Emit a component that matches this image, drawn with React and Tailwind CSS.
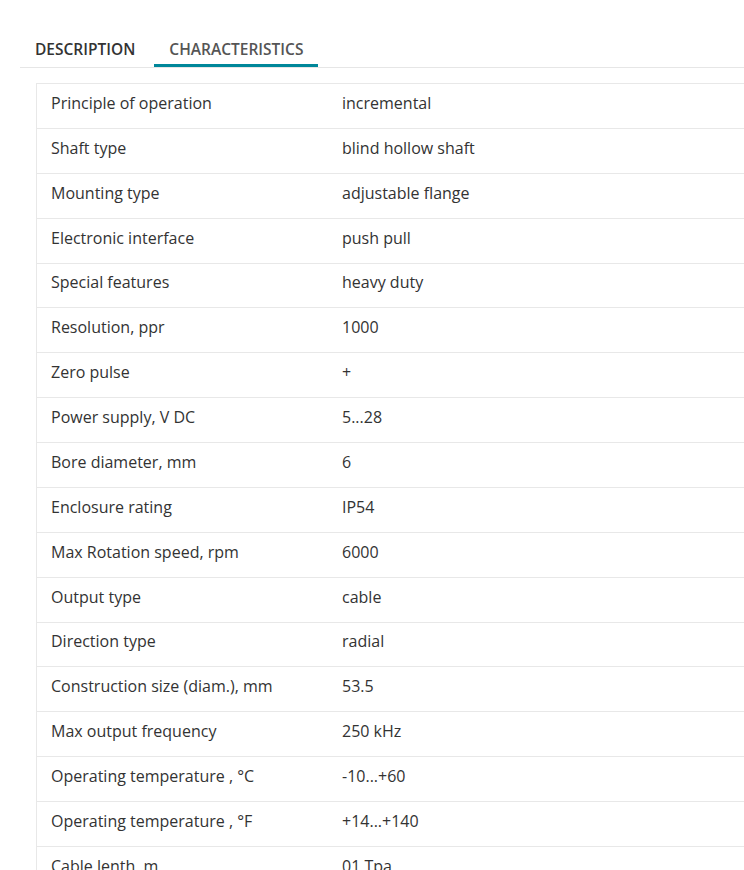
import React from 'react';

const rows = [
  ['Principle of operation', 'incremental'],
  ['Shaft type', 'blind hollow shaft'],
  ['Mounting type', 'adjustable flange'],
  ['Electronic interface', 'push pull'],
  ['Special features', 'heavy duty'],
  ['Resolution, ppr', '1000'],
  ['Zero pulse', '+'],
  ['Power supply, V DC', '5...28'],
  ['Bore diameter, mm', '6'],
  ['Enclosure rating', 'IP54'],
  ['Max Rotation speed, rpm', '6000'],
  ['Output type', 'cable'],
  ['Direction type', 'radial'],
  ['Construction size (diam.), mm', '53.5'],
  ['Max output frequency', '250 kHz'],
  ['Operating temperature , °C', '-10...+60'],
  ['Operating temperature , °F', '+14...+140'],
  ['Cable lenth, m', '01 Tpa'],
];

const App = () => {
  return (
    <div className="bg-white min-h-screen pt-[36px] text-[#333]" style={{ fontFamily: '"Open Sans", sans-serif' }}>
      <div className="ml-5 flex border-b border-[#e6e6e6]">
        <button className="pl-[15px] pr-[15px] mr-[4px] pb-[4px] text-[15.5px] font-semibold uppercase text-[#333] leading-[27px]">
          Description
        </button>
        <button className="px-[15px] pb-[1px] text-[15.5px] font-semibold uppercase text-[#555] leading-[27px] border-b-[3px] border-[#00879a]">
          Characteristics
        </button>
      </div>
      <div className="ml-9 mt-[15px] border-l border-t border-[#e8e8e8]">
        {rows.map((row, index) => (
          <div key={index} className="flex h-[44.875px] items-center pb-[6px] border-b border-[#e8e8e8] text-[16px]">
            <div className="w-[291px] pl-[14px]">{row[0]}</div>
            <div className="pl-[14px]">{row[1]}</div>
          </div>
        ))}
      </div>
    </div>
  );
};

export default App;
